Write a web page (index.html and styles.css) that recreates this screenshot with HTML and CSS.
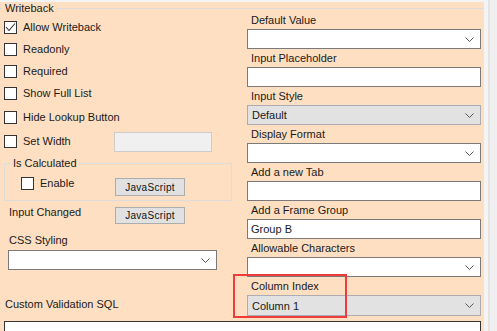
FILE: index.html
```html
<!DOCTYPE html>
<html lang="en">
<head>
    <meta charset="UTF-8">
    <title>Writeback Settings</title>
    <link rel="stylesheet" href="styles.css">
</head>
<body>
    <div class="window">
        <div class="panel">
            <fieldset class="group main-group">
                <legend>Writeback</legend>
                <div class="columns">
                    <div class="col-left">
                        <div class="check-row">
                            <span class="box"><svg width="11" height="11" viewBox="0 0 11 11"><polyline points="1,5 4,8.5 10,1.5" fill="none" stroke="#333" stroke-width="1.1"/></svg></span>
                            <span>Allow Writeback</span>
                        </div>
                        <div class="check-row"><span class="box"></span><span>Readonly</span></div>
                        <div class="check-row"><span class="box"></span><span>Required</span></div>
                        <div class="check-row"><span class="box"></span><span>Show Full List</span></div>
                        <div class="check-row spaced"><span class="box"></span><span>Hide Lookup Button</span></div>
                        <div class="check-row spaced">
                            <span class="box"></span>
                            <span class="row-text">Set Width</span>
                            <span class="textbox disabled"></span>
                        </div>

                        <fieldset class="group calc-group">
                            <legend>Is Calculated</legend>
                            <div class="calc-row">
                                <span class="box"></span>
                                <span class="calc-text">Enable</span>
                                <button class="js-button">JavaScript</button>
                            </div>
                        </fieldset>

                        <div class="action-row">
                            <span class="action-text">Input Changed</span>
                            <button class="js-button short">JavaScript</button>
                        </div>

                        <div class="css-label">CSS Styling</div>
                        <div class="select css-select"><span></span><svg class="chevron" width="9" height="5" viewBox="0 0 9 5"><polyline points="0.5,0.5 4.5,4.5 8.5,0.5" fill="none" stroke="#555" stroke-width="1"/></svg></div>

                        <div class="sql-label">Custom Validation SQL</div>
                    </div>

                    <div class="col-right">
                        <div class="field">
                            <div class="field-label">Default Value</div>
                            <div class="select"><span></span><svg class="chevron" width="9" height="5" viewBox="0 0 9 5"><polyline points="0.5,0.5 4.5,4.5 8.5,0.5" fill="none" stroke="#555" stroke-width="1"/></svg></div>
                        </div>
                        <div class="field">
                            <div class="field-label">Input Placeholder</div>
                            <div class="textbox"></div>
                        </div>
                        <div class="field">
                            <div class="field-label">Input Style</div>
                            <div class="select gray"><span>Default</span><svg class="chevron" width="9" height="5" viewBox="0 0 9 5"><polyline points="0.5,0.5 4.5,4.5 8.5,0.5" fill="none" stroke="#555" stroke-width="1"/></svg></div>
                        </div>
                        <div class="field">
                            <div class="field-label">Display Format</div>
                            <div class="select"><span></span><svg class="chevron" width="9" height="5" viewBox="0 0 9 5"><polyline points="0.5,0.5 4.5,4.5 8.5,0.5" fill="none" stroke="#555" stroke-width="1"/></svg></div>
                        </div>
                        <div class="field">
                            <div class="field-label">Add a new Tab</div>
                            <div class="textbox"></div>
                        </div>
                        <div class="field">
                            <div class="field-label">Add a Frame Group</div>
                            <div class="textbox">Group B</div>
                        </div>
                        <div class="field">
                            <div class="field-label">Allowable Characters</div>
                            <div class="select"><span></span><svg class="chevron" width="9" height="5" viewBox="0 0 9 5"><polyline points="0.5,0.5 4.5,4.5 8.5,0.5" fill="none" stroke="#555" stroke-width="1"/></svg></div>
                        </div>
                        <div class="field">
                            <div class="field-label">Column Index</div>
                            <div class="select gray tall"><span>Column 1</span><svg class="chevron" width="9" height="5" viewBox="0 0 9 5"><polyline points="0.5,0.5 4.5,4.5 8.5,0.5" fill="none" stroke="#555" stroke-width="1"/></svg></div>
                        </div>
                    </div>
                </div>
                <div class="sql-box"></div>
            </fieldset>
            <div class="highlight"></div>
        </div>
        <div class="gutter"></div>
    </div>
</body>
</html>
```

FILE: styles.css
```css
body {
    margin: 0;
    background: #f4f4f4;
    font-family: "Liberation Sans", Arial, sans-serif;
    font-size: 11px;
    color: #1a1a1a;
    overflow: hidden;
}
.window {
    display: flex;
    height: 331px;
}
.panel {
    position: relative;
    width: 484px;
    margin-top: 2px;
    background: #ffdfc1;
    overflow: hidden;
}
.gutter {
    width: 13px;
    background: linear-gradient(to right, #f4f4f4 0, #f4f4f4 4px, #e3e3e3 4px, #e3e3e3 6px, #f0f0f0 6px);
}

/* group boxes */
.group {
    margin: 0;
    padding: 0;
    border: 1px solid #dcdcdc;
}
.group legend {
    padding: 0 2px;
    line-height: 13px;
}
.main-group {
    border-width: 1px 0 0 0;
}
.main-group > legend {
    margin-left: 3px;
}
.columns {
    display: flex;
}
.col-left {
    width: 228px;
    margin-left: 4px;
    padding-top: 1px;
}
.col-right {
    width: 234px;
    margin-left: 15px;
    margin-top: -2px;
}

/* checkbox rows */
.check-row {
    display: flex;
    align-items: center;
    height: 22px;
}
.check-row.spaced {
    margin-top: 2px;
}
.box {
    display: inline-flex;
    align-items: center;
    justify-content: center;
    width: 11px;
    height: 11px;
    border: 1px solid #333;
    background: #fff;
    margin-right: 6px;
    flex-shrink: 0;
}
.row-text {
    width: 91px;
}
.textbox {
    box-sizing: border-box;
    height: 20px;
    border: 1px solid #7a7a7a;
    background: #fff;
    padding: 2px 3px;
    line-height: 14px;
}
.textbox.disabled {
    width: 98px;
    height: 20px;
    margin-top: 2px;
    background: #f0f0f0;
    border-color: #cccccc;
}

/* is calculated */
.calc-group {
    margin-top: 5px;
    width: 228px;
    box-sizing: border-box;
}
.calc-group legend {
    margin-left: 6px;
}
.calc-row {
    display: flex;
    align-items: flex-start;
    height: 30px;
    padding-left: 16px;
}
.calc-row .box {
    margin-top: 7px;
}
.calc-text {
    width: 75px;
    margin-top: 7px;
    line-height: 13px;
}
.calc-row .js-button {
    margin-top: 8px;
}
.js-button {
    width: 70px;
    height: 18px;
    padding: 0;
    background: #e1e1e1;
    border: 1px solid #adadad;
    font-family: "Liberation Sans", Arial, sans-serif;
    font-size: 10px;
    letter-spacing: 0.3px;
    color: #111;
}
.js-button.short {
    height: 17px;
    margin-top: 2px;
}
.action-row {
    display: flex;
    align-items: flex-start;
    margin-top: 4px;
    padding-left: 5px;
}
.action-text {
    width: 106px;
    line-height: 14px;
}
.css-label {
    margin-top: 9px;
    padding-left: 5px;
    line-height: 14px;
}
.css-select {
    width: 209px;
    height: 21px;
    margin-top: 3px;
    margin-left: 4px;
}
.sql-label {
    margin-top: 27px;
    padding-left: 1px;
    line-height: 14px;
}

/* right column fields */
.field {
    height: 38px;
}
.field-label {
    height: 16px;
    line-height: 14px;
    padding-left: 4px;
}
.select {
    box-sizing: border-box;
    display: flex;
    align-items: center;
    justify-content: space-between;
    height: 20px;
    border: 1px solid #7a7a7a;
    background: #fff;
    padding: 0 6px 0 4px;
}
.select.gray {
    background: #e2e2e2;
    border-color: #abadb3;
}
.select.tall {
    height: 21px;
}
.chevron {
    display: block;
}

.sql-box {
    box-sizing: border-box;
    width: 477px;
    height: 30px;
    margin: 4px 0 0 4px;
    border: 1px solid #333;
    background: #fff;
}

/* annotation frame */
.highlight {
    position: absolute;
    left: 233px;
    top: 272px;
    width: 110px;
    height: 40px;
    border: 2px solid #ee3b3b;
}
```
